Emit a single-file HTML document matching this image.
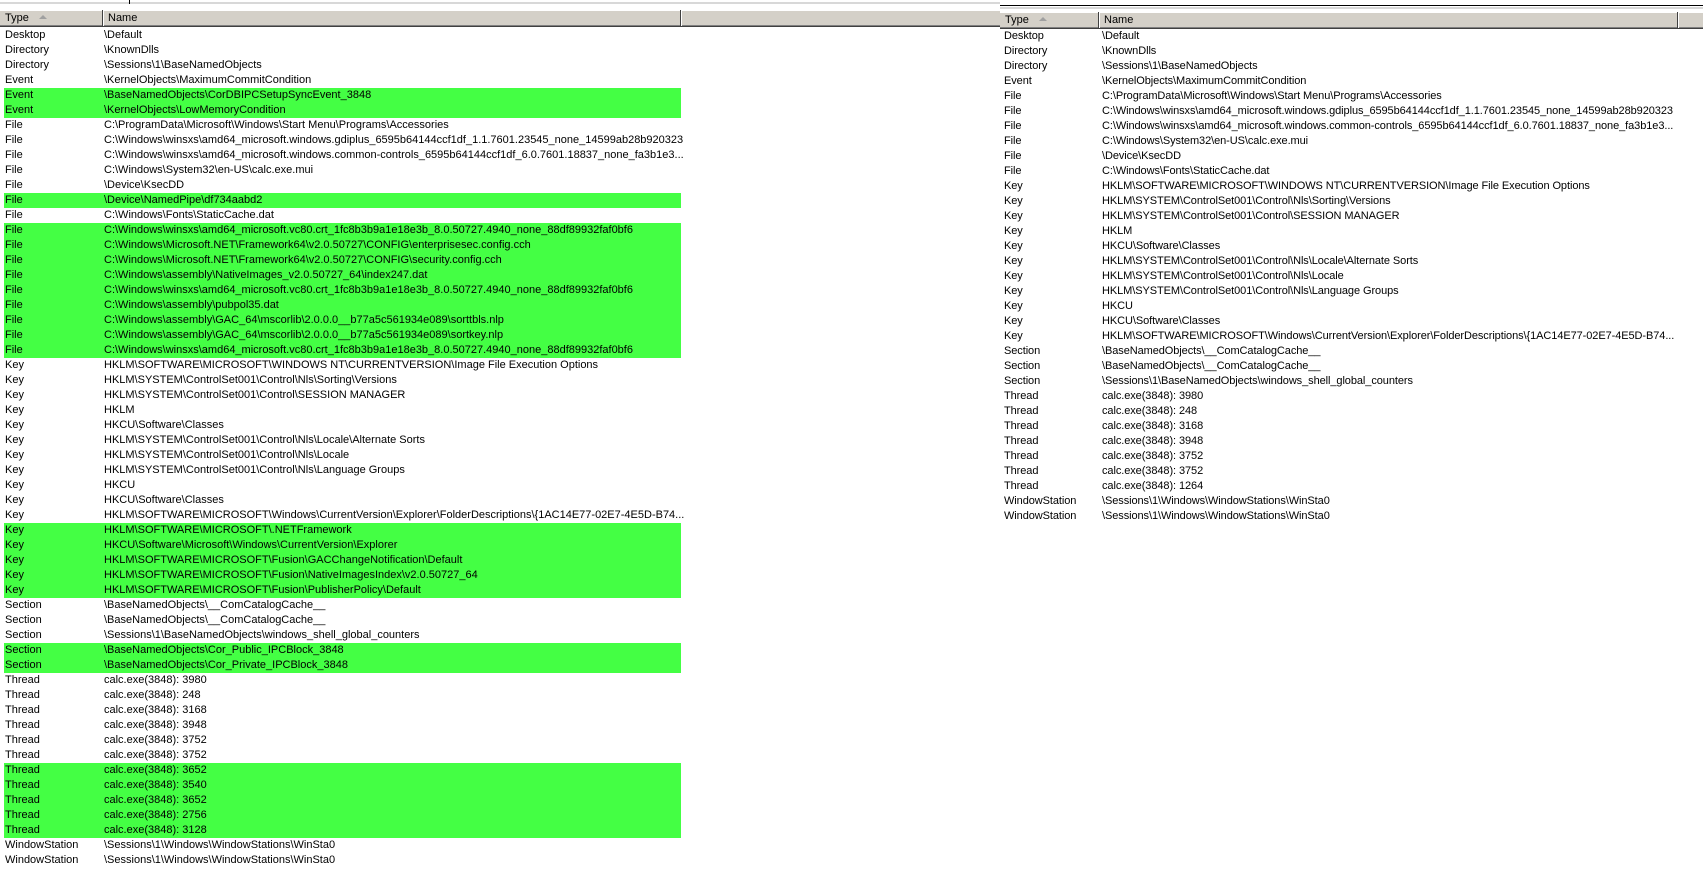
<!DOCTYPE html>
<html><head><meta charset="utf-8"><style>
*{margin:0;padding:0;box-sizing:border-box}
body{width:1703px;height:870px;background:#fff;position:relative;overflow:hidden;font-family:"Liberation Sans",Tahoma,sans-serif;font-size:11px;color:#000}
.hdr{position:absolute;height:17px;background:#d4d0c8;border-bottom:1px solid #404040;box-shadow:inset 0 -1px 0 #808080, inset 0 1px 0 #fff}
.col{position:absolute;top:0;height:16px;border-right:1px solid #404040;box-shadow:1px 0 0 #fff;padding-left:5px;line-height:16px}
.arrow{display:inline-block;margin-left:10px;width:0;height:0;border-left:4px solid transparent;border-right:4px solid transparent;border-bottom:4px solid #a0a0a0;vertical-align:2px}
.t{position:absolute}
.r{position:relative;height:15px;line-height:15px;white-space:nowrap}
.r.g{background:#44ff44}
.r span{position:absolute;top:0}
.rt .r span{letter-spacing:-0.08px}
</style></head><body>
<div style="position:absolute;left:0;top:2px;width:1000px;height:2px;background:#d8d8d8"></div>
<div style="position:absolute;left:129px;top:0;width:1px;height:4px;background:#000"></div>
<div style="position:absolute;left:1000px;top:5px;width:703px;height:1px;background:#000"></div>
<div style="position:absolute;left:1000px;top:7px;width:703px;height:2px;background:#d8d8d8"></div>

<div class="hdr" style="left:0;top:10px;width:1000px">
<div class="col" style="left:0;width:103px">Type<span class="arrow"></span></div>
<div class="col" style="left:103px;width:578px">Name</div>
</div>
<div class="hdr" style="left:1000px;top:12px;width:703px">
<div class="col" style="left:0;width:99px">Type<span class="arrow"></span></div>
<div class="col" style="left:99px;width:579px">Name</div>
</div>

<div class="t" style="left:0;top:28px;width:1000px">
<div class="r"><span style="left:5px">Desktop</span><span style="left:104px">\Default</span></div>
<div class="r"><span style="left:5px">Directory</span><span style="left:104px">\KnownDlls</span></div>
<div class="r"><span style="left:5px">Directory</span><span style="left:104px">\Sessions\1\BaseNamedObjects</span></div>
<div class="r"><span style="left:5px">Event</span><span style="left:104px">\KernelObjects\MaximumCommitCondition</span></div>
<div class="r g" style="margin-left:4px;width:677px"><span style="left:1px">Event</span><span style="left:100px">\BaseNamedObjects\CorDBIPCSetupSyncEvent_3848</span></div>
<div class="r g" style="margin-left:4px;width:677px"><span style="left:1px">Event</span><span style="left:100px">\KernelObjects\LowMemoryCondition</span></div>
<div class="r"><span style="left:5px">File</span><span style="left:104px">C:\ProgramData\Microsoft\Windows\Start Menu\Programs\Accessories</span></div>
<div class="r"><span style="left:5px">File</span><span style="left:104px">C:\Windows\winsxs\amd64_microsoft.windows.gdiplus_6595b64144ccf1df_1.1.7601.23545_none_14599ab28b920323</span></div>
<div class="r"><span style="left:5px">File</span><span style="left:104px">C:\Windows\winsxs\amd64_microsoft.windows.common-controls_6595b64144ccf1df_6.0.7601.18837_none_fa3b1e3...</span></div>
<div class="r"><span style="left:5px">File</span><span style="left:104px">C:\Windows\System32\en-US\calc.exe.mui</span></div>
<div class="r"><span style="left:5px">File</span><span style="left:104px">\Device\KsecDD</span></div>
<div class="r g" style="margin-left:4px;width:677px"><span style="left:1px">File</span><span style="left:100px">\Device\NamedPipe\df734aabd2</span></div>
<div class="r"><span style="left:5px">File</span><span style="left:104px">C:\Windows\Fonts\StaticCache.dat</span></div>
<div class="r g" style="margin-left:4px;width:677px"><span style="left:1px">File</span><span style="left:100px">C:\Windows\winsxs\amd64_microsoft.vc80.crt_1fc8b3b9a1e18e3b_8.0.50727.4940_none_88df89932faf0bf6</span></div>
<div class="r g" style="margin-left:4px;width:677px"><span style="left:1px">File</span><span style="left:100px">C:\Windows\Microsoft.NET\Framework64\v2.0.50727\CONFIG\enterprisesec.config.cch</span></div>
<div class="r g" style="margin-left:4px;width:677px"><span style="left:1px">File</span><span style="left:100px">C:\Windows\Microsoft.NET\Framework64\v2.0.50727\CONFIG\security.config.cch</span></div>
<div class="r g" style="margin-left:4px;width:677px"><span style="left:1px">File</span><span style="left:100px">C:\Windows\assembly\NativeImages_v2.0.50727_64\index247.dat</span></div>
<div class="r g" style="margin-left:4px;width:677px"><span style="left:1px">File</span><span style="left:100px">C:\Windows\winsxs\amd64_microsoft.vc80.crt_1fc8b3b9a1e18e3b_8.0.50727.4940_none_88df89932faf0bf6</span></div>
<div class="r g" style="margin-left:4px;width:677px"><span style="left:1px">File</span><span style="left:100px">C:\Windows\assembly\pubpol35.dat</span></div>
<div class="r g" style="margin-left:4px;width:677px"><span style="left:1px">File</span><span style="left:100px">C:\Windows\assembly\GAC_64\mscorlib\2.0.0.0__b77a5c561934e089\sorttbls.nlp</span></div>
<div class="r g" style="margin-left:4px;width:677px"><span style="left:1px">File</span><span style="left:100px">C:\Windows\assembly\GAC_64\mscorlib\2.0.0.0__b77a5c561934e089\sortkey.nlp</span></div>
<div class="r g" style="margin-left:4px;width:677px"><span style="left:1px">File</span><span style="left:100px">C:\Windows\winsxs\amd64_microsoft.vc80.crt_1fc8b3b9a1e18e3b_8.0.50727.4940_none_88df89932faf0bf6</span></div>
<div class="r"><span style="left:5px">Key</span><span style="left:104px">HKLM\SOFTWARE\MICROSOFT\WINDOWS NT\CURRENTVERSION\Image File Execution Options</span></div>
<div class="r"><span style="left:5px">Key</span><span style="left:104px">HKLM\SYSTEM\ControlSet001\Control\Nls\Sorting\Versions</span></div>
<div class="r"><span style="left:5px">Key</span><span style="left:104px">HKLM\SYSTEM\ControlSet001\Control\SESSION MANAGER</span></div>
<div class="r"><span style="left:5px">Key</span><span style="left:104px">HKLM</span></div>
<div class="r"><span style="left:5px">Key</span><span style="left:104px">HKCU\Software\Classes</span></div>
<div class="r"><span style="left:5px">Key</span><span style="left:104px">HKLM\SYSTEM\ControlSet001\Control\Nls\Locale\Alternate Sorts</span></div>
<div class="r"><span style="left:5px">Key</span><span style="left:104px">HKLM\SYSTEM\ControlSet001\Control\Nls\Locale</span></div>
<div class="r"><span style="left:5px">Key</span><span style="left:104px">HKLM\SYSTEM\ControlSet001\Control\Nls\Language Groups</span></div>
<div class="r"><span style="left:5px">Key</span><span style="left:104px">HKCU</span></div>
<div class="r"><span style="left:5px">Key</span><span style="left:104px">HKCU\Software\Classes</span></div>
<div class="r"><span style="left:5px">Key</span><span style="left:104px">HKLM\SOFTWARE\MICROSOFT\Windows\CurrentVersion\Explorer\FolderDescriptions\{1AC14E77-02E7-4E5D-B74...</span></div>
<div class="r g" style="margin-left:4px;width:677px"><span style="left:1px">Key</span><span style="left:100px">HKLM\SOFTWARE\MICROSOFT\.NETFramework</span></div>
<div class="r g" style="margin-left:4px;width:677px"><span style="left:1px">Key</span><span style="left:100px">HKCU\Software\Microsoft\Windows\CurrentVersion\Explorer</span></div>
<div class="r g" style="margin-left:4px;width:677px"><span style="left:1px">Key</span><span style="left:100px">HKLM\SOFTWARE\MICROSOFT\Fusion\GACChangeNotification\Default</span></div>
<div class="r g" style="margin-left:4px;width:677px"><span style="left:1px">Key</span><span style="left:100px">HKLM\SOFTWARE\MICROSOFT\Fusion\NativeImagesIndex\v2.0.50727_64</span></div>
<div class="r g" style="margin-left:4px;width:677px"><span style="left:1px">Key</span><span style="left:100px">HKLM\SOFTWARE\MICROSOFT\Fusion\PublisherPolicy\Default</span></div>
<div class="r"><span style="left:5px">Section</span><span style="left:104px">\BaseNamedObjects\__ComCatalogCache__</span></div>
<div class="r"><span style="left:5px">Section</span><span style="left:104px">\BaseNamedObjects\__ComCatalogCache__</span></div>
<div class="r"><span style="left:5px">Section</span><span style="left:104px">\Sessions\1\BaseNamedObjects\windows_shell_global_counters</span></div>
<div class="r g" style="margin-left:4px;width:677px"><span style="left:1px">Section</span><span style="left:100px">\BaseNamedObjects\Cor_Public_IPCBlock_3848</span></div>
<div class="r g" style="margin-left:4px;width:677px"><span style="left:1px">Section</span><span style="left:100px">\BaseNamedObjects\Cor_Private_IPCBlock_3848</span></div>
<div class="r"><span style="left:5px">Thread</span><span style="left:104px">calc.exe(3848): 3980</span></div>
<div class="r"><span style="left:5px">Thread</span><span style="left:104px">calc.exe(3848): 248</span></div>
<div class="r"><span style="left:5px">Thread</span><span style="left:104px">calc.exe(3848): 3168</span></div>
<div class="r"><span style="left:5px">Thread</span><span style="left:104px">calc.exe(3848): 3948</span></div>
<div class="r"><span style="left:5px">Thread</span><span style="left:104px">calc.exe(3848): 3752</span></div>
<div class="r"><span style="left:5px">Thread</span><span style="left:104px">calc.exe(3848): 3752</span></div>
<div class="r g" style="margin-left:4px;width:677px"><span style="left:1px">Thread</span><span style="left:100px">calc.exe(3848): 3652</span></div>
<div class="r g" style="margin-left:4px;width:677px"><span style="left:1px">Thread</span><span style="left:100px">calc.exe(3848): 3540</span></div>
<div class="r g" style="margin-left:4px;width:677px"><span style="left:1px">Thread</span><span style="left:100px">calc.exe(3848): 3652</span></div>
<div class="r g" style="margin-left:4px;width:677px"><span style="left:1px">Thread</span><span style="left:100px">calc.exe(3848): 2756</span></div>
<div class="r g" style="margin-left:4px;width:677px"><span style="left:1px">Thread</span><span style="left:100px">calc.exe(3848): 3128</span></div>
<div class="r"><span style="left:5px">WindowStation</span><span style="left:104px">\Sessions\1\Windows\WindowStations\WinSta0</span></div>
<div class="r"><span style="left:5px">WindowStation</span><span style="left:104px">\Sessions\1\Windows\WindowStations\WinSta0</span></div>
</div>

<div class="t rt" style="left:1000px;top:29px;width:703px">
<div class="r"><span style="left:4px">Desktop</span><span style="left:102px">\Default</span></div>
<div class="r"><span style="left:4px">Directory</span><span style="left:102px">\KnownDlls</span></div>
<div class="r"><span style="left:4px">Directory</span><span style="left:102px">\Sessions\1\BaseNamedObjects</span></div>
<div class="r"><span style="left:4px">Event</span><span style="left:102px">\KernelObjects\MaximumCommitCondition</span></div>
<div class="r"><span style="left:4px">File</span><span style="left:102px">C:\ProgramData\Microsoft\Windows\Start Menu\Programs\Accessories</span></div>
<div class="r"><span style="left:4px">File</span><span style="left:102px">C:\Windows\winsxs\amd64_microsoft.windows.gdiplus_6595b64144ccf1df_1.1.7601.23545_none_14599ab28b920323</span></div>
<div class="r"><span style="left:4px">File</span><span style="left:102px">C:\Windows\winsxs\amd64_microsoft.windows.common-controls_6595b64144ccf1df_6.0.7601.18837_none_fa3b1e3...</span></div>
<div class="r"><span style="left:4px">File</span><span style="left:102px">C:\Windows\System32\en-US\calc.exe.mui</span></div>
<div class="r"><span style="left:4px">File</span><span style="left:102px">\Device\KsecDD</span></div>
<div class="r"><span style="left:4px">File</span><span style="left:102px">C:\Windows\Fonts\StaticCache.dat</span></div>
<div class="r"><span style="left:4px">Key</span><span style="left:102px">HKLM\SOFTWARE\MICROSOFT\WINDOWS NT\CURRENTVERSION\Image File Execution Options</span></div>
<div class="r"><span style="left:4px">Key</span><span style="left:102px">HKLM\SYSTEM\ControlSet001\Control\Nls\Sorting\Versions</span></div>
<div class="r"><span style="left:4px">Key</span><span style="left:102px">HKLM\SYSTEM\ControlSet001\Control\SESSION MANAGER</span></div>
<div class="r"><span style="left:4px">Key</span><span style="left:102px">HKLM</span></div>
<div class="r"><span style="left:4px">Key</span><span style="left:102px">HKCU\Software\Classes</span></div>
<div class="r"><span style="left:4px">Key</span><span style="left:102px">HKLM\SYSTEM\ControlSet001\Control\Nls\Locale\Alternate Sorts</span></div>
<div class="r"><span style="left:4px">Key</span><span style="left:102px">HKLM\SYSTEM\ControlSet001\Control\Nls\Locale</span></div>
<div class="r"><span style="left:4px">Key</span><span style="left:102px">HKLM\SYSTEM\ControlSet001\Control\Nls\Language Groups</span></div>
<div class="r"><span style="left:4px">Key</span><span style="left:102px">HKCU</span></div>
<div class="r"><span style="left:4px">Key</span><span style="left:102px">HKCU\Software\Classes</span></div>
<div class="r"><span style="left:4px">Key</span><span style="left:102px">HKLM\SOFTWARE\MICROSOFT\Windows\CurrentVersion\Explorer\FolderDescriptions\{1AC14E77-02E7-4E5D-B74...</span></div>
<div class="r"><span style="left:4px">Section</span><span style="left:102px">\BaseNamedObjects\__ComCatalogCache__</span></div>
<div class="r"><span style="left:4px">Section</span><span style="left:102px">\BaseNamedObjects\__ComCatalogCache__</span></div>
<div class="r"><span style="left:4px">Section</span><span style="left:102px">\Sessions\1\BaseNamedObjects\windows_shell_global_counters</span></div>
<div class="r"><span style="left:4px">Thread</span><span style="left:102px">calc.exe(3848): 3980</span></div>
<div class="r"><span style="left:4px">Thread</span><span style="left:102px">calc.exe(3848): 248</span></div>
<div class="r"><span style="left:4px">Thread</span><span style="left:102px">calc.exe(3848): 3168</span></div>
<div class="r"><span style="left:4px">Thread</span><span style="left:102px">calc.exe(3848): 3948</span></div>
<div class="r"><span style="left:4px">Thread</span><span style="left:102px">calc.exe(3848): 3752</span></div>
<div class="r"><span style="left:4px">Thread</span><span style="left:102px">calc.exe(3848): 3752</span></div>
<div class="r"><span style="left:4px">Thread</span><span style="left:102px">calc.exe(3848): 1264</span></div>
<div class="r"><span style="left:4px">WindowStation</span><span style="left:102px">\Sessions\1\Windows\WindowStations\WinSta0</span></div>
<div class="r"><span style="left:4px">WindowStation</span><span style="left:102px">\Sessions\1\Windows\WindowStations\WinSta0</span></div>
</div>
</body></html>
